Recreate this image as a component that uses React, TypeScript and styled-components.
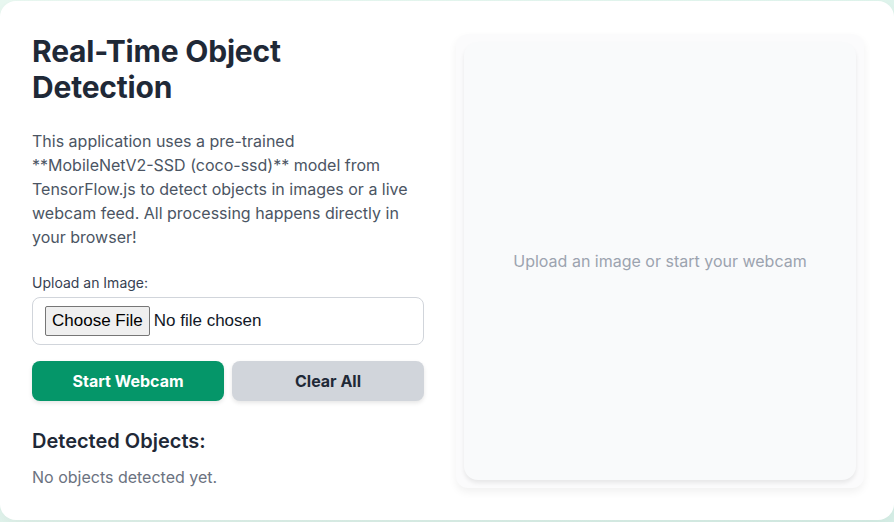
import { type FC } from "react";
import styled, { createGlobalStyle } from "styled-components";

const GlobalStyle = createGlobalStyle`
  html, body {
    margin: 0;
    padding: 0;
  }
  body {
    font-family: Inter, "Noto Sans", sans-serif;
    background: linear-gradient(135deg, #e9f8f1 0%, #d9f2ea 100%);
    min-height: 522px;
  }
  * {
    box-sizing: border-box;
  }
`;

const Page = styled.div`
  width: 894px;
  height: 522px;
  padding: 1px 0 2px 0;
  overflow: hidden;
`;

const Card = styled.main`
  height: 519px;
  background: #ffffff;
  border-radius: 16px;
  box-shadow: 0 10px 25px rgba(0, 0, 0, 0.06);
  padding: 32px 30px 32px 32px;
  display: grid;
  grid-template-columns: 392px 408px;
  column-gap: 32px;
  align-items: start;
`;

const Controls = styled.section`
  display: flex;
  flex-direction: column;
`;

const Title = styled.h1`
  font-size: 30px;
  line-height: 36px;
  font-weight: 700;
  color: #1f2937;
  margin: 0 0 24px 0;
  letter-spacing: -0.2px;
`;

const Intro = styled.p`
  font-size: 16px;
  line-height: 24px;
  color: #4b5563;
  margin: 0 0 24px 0;
`;

const Label = styled.label`
  display: block;
  font-size: 14px;
  line-height: 20px;
  font-weight: 400;
  color: #374151;
  margin-bottom: 4px;
`;

const FileInput = styled.input`
  display: block;
  width: 100%;
  padding: 8px 12px;
  border: 1px solid #d1d5db;
  border-radius: 8px;
  background: #ffffff;
  font-family: "Liberation Sans", Arial, sans-serif;
  font-size: 17px;
  line-height: 30px;
  color: #111827;

  &::file-selector-button {
    font-family: "Liberation Sans", Arial, sans-serif;
    font-size: 17px;
    height: 30px;
    padding: 0 6px;
    margin-right: 4px;
    border: 1px solid #767676;
    border-radius: 2px;
    background: #efefef;
    color: #000000;
  }
`;

const ButtonRow = styled.div`
  display: grid;
  grid-template-columns: 1fr 1fr;
  gap: 8px;
  margin-top: 16px;
`;

const ActionButton = styled.button<{ $variant: "primary" | "muted" }>`
  height: 40px;
  border: none;
  border-radius: 8px;
  font-family: Inter, "Noto Sans", sans-serif;
  font-size: 16px;
  font-weight: 700;
  cursor: pointer;
  background: ${(p) => (p.$variant === "primary" ? "#059669" : "#d1d5db")};
  color: ${(p) => (p.$variant === "primary" ? "#ffffff" : "#1f2937")};
  box-shadow: 0 2px 4px rgba(0, 0, 0, 0.1);
`;

const SectionTitle = styled.h2`
  font-size: 20px;
  line-height: 28px;
  font-weight: 600;
  color: #1f2937;
  margin: 26px 0 10px 0;
`;

const EmptyText = styled.p`
  font-size: 16px;
  line-height: 24px;
  color: #6b7280;
  margin: 0;
`;

const PreviewFrame = styled.section`
  margin-top: 1px;
  height: 454px;
  padding: 8px;
  border-radius: 12px;
  background: #fbfbfc;
  box-shadow: 0 4px 8px rgba(0, 0, 0, 0.06);
`;

const Preview = styled.div`
  height: 100%;
  border-radius: 14px;
  background: #f9fafb;
  box-shadow: 0 3px 4px rgba(0, 0, 0, 0.08);
  display: flex;
  align-items: center;
  justify-content: center;
`;

const Placeholder = styled.span`
  font-size: 16px;
  color: #9ca3af;
`;

// word joiner keeps the model name from splitting at its hyphen
const intro =
  "This application uses a pre-trained **MobileNetV2-\u2060SSD (coco-ssd)** model from " +
  "TensorFlow.js to detect objects in images or a live webcam feed. All processing " +
  "happens directly in your browser!";

const App: FC = () => {
  return (
    <>
      <GlobalStyle />
      <Page>
        <Card>
          <Controls>
            <Title>Real-Time Object Detection</Title>
            <Intro>{intro}</Intro>

            <Label htmlFor="image-upload">Upload an Image:</Label>
            <FileInput id="image-upload" type="file" accept="image/*" />

            <ButtonRow>
              <ActionButton $variant="primary">Start Webcam</ActionButton>
              <ActionButton $variant="muted">Clear All</ActionButton>
            </ButtonRow>

            <SectionTitle>Detected Objects:</SectionTitle>
            <EmptyText>No objects detected yet.</EmptyText>
          </Controls>

          <PreviewFrame>
            <Preview>
              <Placeholder>Upload an image or start your webcam</Placeholder>
            </Preview>
          </PreviewFrame>
        </Card>
      </Page>
    </>
  );
};

export default App;
